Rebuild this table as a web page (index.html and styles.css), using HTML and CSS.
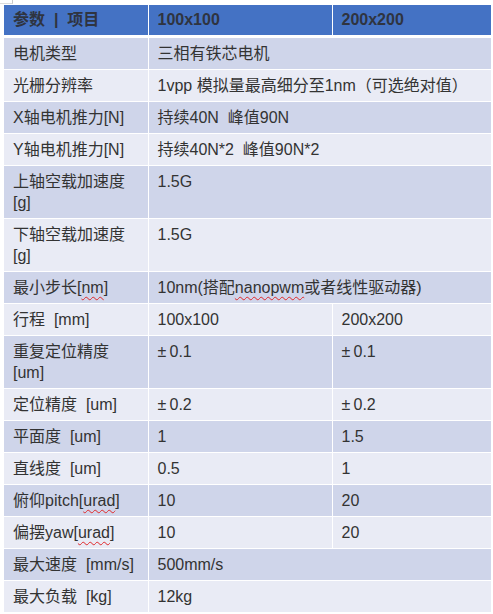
FILE: index.html
```html
<!DOCTYPE html>
<html lang="zh">
<head>
<meta charset="utf-8">
<link rel="stylesheet" href="styles.css">
</head>
<body>
<div class="mark"></div>
<table class="spec">
  <colgroup>
    <col class="c1"><col class="c2"><col class="c3">
  </colgroup>
  <thead>
    <tr><th>参数&nbsp; |&nbsp; 项目</th><th>100x100</th><th>200x200</th></tr>
  </thead>
  <tbody>
    <tr class="dk"><td>电机类型</td><td colspan="2">三相有铁芯电机</td></tr>
    <tr class="lt"><td>光栅分辨率</td><td colspan="2">1vpp 模拟量最高细分至1nm（可选绝对值）</td></tr>
    <tr class="dk"><td>X轴电机推力[N]</td><td colspan="2">持续40N&nbsp; 峰值90N</td></tr>
    <tr class="lt"><td>Y轴电机推力[N]</td><td colspan="2">持续40N*2&nbsp; 峰值90N*2</td></tr>
    <tr class="dk"><td>上轴空载加速度<br>[g]</td><td colspan="2">1.5G</td></tr>
    <tr class="lt"><td>下轴空载加速度<br>[g]</td><td colspan="2">1.5G</td></tr>
    <tr class="dk"><td>最小步长[<span class="sq">nm</span>]</td><td colspan="2">10nm(搭配<span class="sq">nanopwm</span>或者线性驱动器)</td></tr>
    <tr class="lt"><td>行程&nbsp; [mm]</td><td>100x100</td><td>200x200</td></tr>
    <tr class="dk"><td>重复定位精度<br>[um]</td><td>±&#8201;0.1</td><td>±&#8201;0.1</td></tr>
    <tr class="lt"><td>定位精度&nbsp; [um]</td><td>±&#8201;0.2</td><td>±&#8201;0.2</td></tr>
    <tr class="dk"><td>平面度&nbsp; [um]</td><td>1</td><td>1.5</td></tr>
    <tr class="lt"><td>直线度&nbsp; [um]</td><td>0.5</td><td>1</td></tr>
    <tr class="dk"><td>俯仰pitch[<span class="sq">urad</span>]</td><td>10</td><td>20</td></tr>
    <tr class="lt"><td>偏摆yaw[<span class="sq">urad</span>]</td><td>10</td><td>20</td></tr>
    <tr class="dk"><td>最大速度&nbsp; [mm/s]</td><td colspan="2">500mm/s</td></tr>
    <tr class="lt"><td>最大负载&nbsp; [kg]</td><td colspan="2">12kg</td></tr>
  </tbody>
</table>
</body>
</html>
```
FILE: styles.css
```css
html, body {
  margin: 0;
  padding: 0;
  background: #ffffff;
}
body {
  font-family: "Liberation Sans", Arial, "Noto Sans CJK SC", sans-serif;
  font-size: 16px;
  color: #333333;
}
.mark {
  width: 13px;
  height: 4px;
  border-right: 1px solid #c8c8c8;
  border-bottom: 1px solid #dcdcdc;
  box-sizing: border-box;
}
.spec {
  margin: 1px 0 0 4px;
  width: 487px;
  border-collapse: collapse;
  table-layout: fixed;
}
.c1 { width: 144px; }
.c2 { width: 184px; }
.c3 { width: 159px; }
.spec th, .spec td {
  border: 1px solid #ffffff;
  text-align: left;
  vertical-align: top;
  line-height: 21px;
  padding: 5px 9px;
  font-weight: normal;
}
.spec thead th {
  background: #4472c4;
  color: #2f3440;
  font-weight: bold;
  height: 30px;
  line-height: 20px;
  padding: 5px 9px;
  box-sizing: border-box;
  border-top: 0;
  border-bottom: 3px solid #ffffff;
  vertical-align: middle;
}
.spec thead th:first-child { border-left: 0; }
.spec td:first-child { border-left: 0; }
.spec td:last-child, .spec th:last-child { border-right: 0; }
.dk td { background: #cfd5ea; }
.lt td { background: #e9ebf5; }
.sq {
  text-decoration: underline wavy #e0282a;
  text-decoration-thickness: 1px;
  text-underline-offset: 3px;
}
```
